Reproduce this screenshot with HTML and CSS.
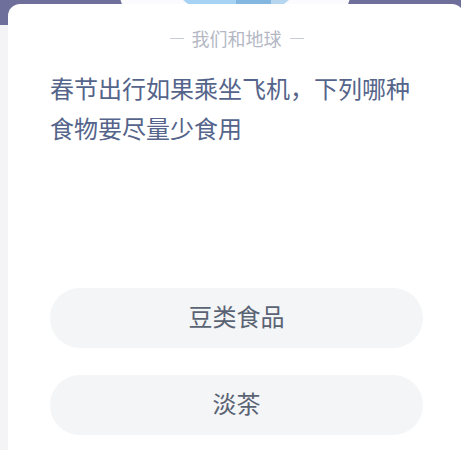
FILE: index.html
```html
<!DOCTYPE html>
<html lang="zh-CN">
<head>
<meta charset="utf-8">
<link rel="stylesheet" href="styles.css">
</head>
<body>
<div class="page">
  <div class="halo"></div>
  <div class="globe"></div>
  <div class="card">
    <div class="subtitle"><span class="dash"></span>我们和地球<span class="dash"></span></div>
    <div class="question">春节出行如果乘坐飞机，下列哪种食物要尽量少食用</div>
    <div class="options">
      <div class="option">豆类食品</div>
      <div class="option">淡茶</div>
    </div>
  </div>
</div>
</body>
</html>
```
FILE: styles.css
```css
html, body {
  margin: 0;
  padding: 0;
}
body {
  width: 461px;
  height: 450px;
  overflow: hidden;
  background: #f4f4f6;
  font-family: "Noto Sans CJK SC", "Noto Sans", sans-serif;
}
.page {
  position: relative;
  height: 450px;
  background: linear-gradient(#6f6f9c 0, #6f6f9c 25px, #f4f4f6 25px);
  padding-top: 4px;
  box-sizing: border-box;
}
.halo {
  position: absolute;
  left: 115px;
  top: -156px;
  width: 240px;
  height: 240px;
  border-radius: 50%;
  background: #fbfbfd;
}
.globe {
  position: absolute;
  left: 156px;
  top: -140px;
  width: 160px;
  height: 160px;
  border-radius: 50%;
  background: linear-gradient(90deg, #a6d3f4 0, #a6d3f4 50%, #84b7df 50%, #84b7df 72%, #b5d6ee 72%);
}
.card {
  position: relative;
  margin-left: 8px;
  width: 456px;
  height: 460px;
  background: #ffffff;
  border-radius: 12px 12px 0 0;
  padding: 22px 41px 0 42px;
  box-sizing: border-box;
}
.subtitle {
  display: flex;
  justify-content: center;
  align-items: center;
  gap: 8px;
  font-size: 18px;
  line-height: 24px;
  color: #b4b8c4;
}
.dash {
  width: 14px;
  height: 1px;
  background: #c8ccd5;
}
.question {
  margin-top: 18px;
  font-size: 24px;
  line-height: 40px;
  color: #55648a;
}
.options {
  margin-top: 140px;
  display: flex;
  flex-direction: column;
  gap: 27px;
}
.option {
  height: 60px;
  border-radius: 30px;
  background: #f3f5f7;
  display: flex;
  align-items: center;
  justify-content: center;
  font-size: 24px;
  line-height: 30px;
  padding-bottom: 4px;
  box-sizing: border-box;
  color: #5a6373;
}
```
